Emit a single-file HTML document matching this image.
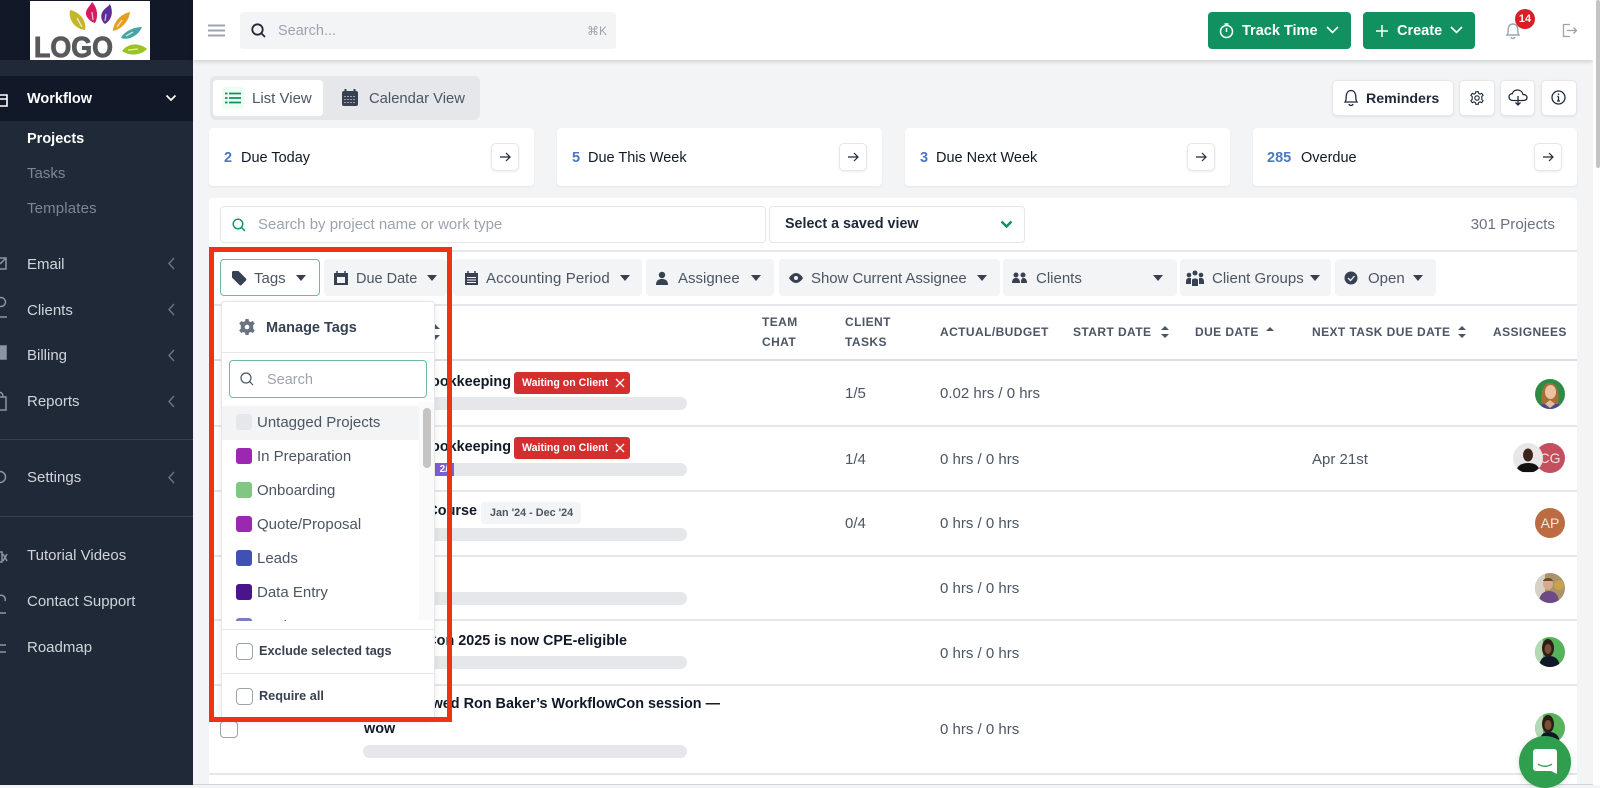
<!DOCTYPE html>
<html lang="en"><head><meta charset="utf-8"><title>Projects</title>
<style>
*{box-sizing:border-box}
html,body{margin:0;padding:0;width:1600px;height:785px;overflow:hidden;background:#f3f4f6;font-family:"Liberation Sans",Arial,sans-serif;color:#111827}
.a{position:absolute}
.t{position:absolute;white-space:nowrap;line-height:20px;height:20px;transform:translateY(1px)}
svg{position:absolute;overflow:visible}
.side{color:#d1d5db;font-size:15px;left:27px}
.btn{position:absolute;background:#fff;border:1px solid #e5e7eb;border-radius:5px;box-shadow:0 1px 2px rgba(0,0,0,.08)}
.card{position:absolute;top:128px;height:58px;background:#fff;border-radius:4px;box-shadow:0 1px 2px rgba(0,0,0,.06)}
.num{color:#4b78c0;font-weight:bold;font-size:14.5px}
.lbl{font-size:14.5px;color:#111827}
.chip{position:absolute;top:259px;height:37px;background:#f3f4f6;border-radius:4px}
.cl{color:#4b5563;font-size:15px;top:268px}
.th{font-size:12px;font-weight:bold;color:#4b5563;letter-spacing:.42px;transform:none}
.line{position:absolute;left:209px;width:1368px;height:2px;background:#e5e7eb}
.cell{font-size:15px;color:#4b5563;transform:none}
.title{font-size:14.4px;font-weight:bold;color:#111827}
.bar{position:absolute;left:363px;width:324px;height:13px;border-radius:7px;background:#e5e7eb}
.wait{position:absolute;left:514px;width:116px;height:22px;background:#d32f2f;border-radius:3px;color:#fff;font-size:10.6px;font-weight:bold;line-height:22px;padding-left:8px;white-space:nowrap}
.av{position:absolute;width:30px;height:30px;border-radius:50%;overflow:hidden;left:1535px}
.sw{position:absolute;left:236px;width:16px;height:16px;border-radius:3px}
.it{font-size:15px;color:#4b5563;left:257px}
.cb{position:absolute;left:236px;width:17px;height:17px;border:1px solid #9ca3af;border-radius:4px;background:#fff}
</style></head><body>

<!-- sidebar -->
<div class="a" style="left:0;top:0;width:193px;height:785px;background:#1f2937"></div>
<div class="a" style="left:0;top:0;width:193px;height:60px;background:#111827"></div>
<div class="a" style="left:0;top:76px;width:193px;height:45px;background:#111827"></div>
<div class="a" style="left:30px;top:1px;width:120px;height:59px;background:#fff"></div>
<svg style="left:30px;top:1px" width="120" height="59" viewBox="0 0 120 59">
<path d="M40 9C50 11 57 20 55 29C46 28 38 20 40 9Z" fill="#c4b52c"/>
<path d="M62 1C67 6 69 15 65 22C60 21 55 15 56 11C57 7 60 5 62 1Z" fill="#d81b60"/>
<path d="M80 3C83 10 83 18 75 23C71 20 70 14 73 10C75 7 78 6 80 3Z" fill="#5e2b97"/>
<path d="M100 11C99 20 92 28 83 30C83 22 90 13 100 11Z" fill="#e3a020"/>
<path d="M112 26C109 34 99 40 91 37C93 32 102 26 112 26Z" fill="#45a5a5"/>
<path d="M117 48C110 55 99 55 92 50C99 41 110 42 117 48Z" fill="#9cc324"/>
<path d="M47 17L52 26M62 11L63 19M76 13L75 20M92 19L87 26M103 31L96 35M108 48L98 49" stroke="#fff" stroke-width="1.300" opacity=".7" fill="none"/>
<text x="4" y="56" font-family="Liberation Sans" font-weight="bold" font-size="29" fill="#58595b" stroke="#58595b" stroke-width=".9" textLength="79" lengthAdjust="spacingAndGlyphs">LOGO</text>
</svg>
<svg style="left:0;top:90px" width="8" height="18" viewBox="0 0 8 18"><path d="M-6 5H7V16H-6ZM-6 9H7" fill="none" stroke="#fff" stroke-width="1.600"/></svg>
<div class="t side" style="top:88px;color:#fff;font-weight:bold;font-size:14.500px">Workflow</div>
<svg style="left:165px;top:94px" width="12" height="8"><path d="M1.500 1.500L6 6L10.500 1.500" fill="none" stroke="#fff" stroke-width="1.700"/></svg>
<div class="t side" style="top:128px;color:#fff;font-weight:bold;font-size:14.500px">Projects</div>
<div class="t side" style="top:163px;color:#7d8694">Tasks</div>
<div class="t side" style="top:198px;color:#7d8694;letter-spacing:.15px">Templates</div>
<div class="t side" style="top:254px">Email</div>
<div class="t side" style="top:300px">Clients</div>
<div class="t side" style="top:345px">Billing</div>
<div class="t side" style="top:391px">Reports</div>
<div class="t side" style="top:467px">Settings</div>
<div class="t side" style="top:545px">Tutorial Videos</div>
<div class="t side" style="top:591px">Contact Support</div>
<div class="t side" style="top:637px">Roadmap</div>
<svg style="left:0;top:255px" width="8" height="400" fill="none" stroke="#8d95a1" stroke-width="1.500">
<path d="M-5 3H6V14H-5ZM0 9L6 3"/><path d="M-3 45A4 4 0 0 1 5 49A4 4 0 0 1 -3 45M-5 62H7"/><path d="M-5 91H6V104H-5Z" fill="#8d95a1"/><path d="M-5 142H6V155H-5ZM-2 142C-2 136 3 136 3 142"/><circle cx="0" cy="222" r="5.500"/><path d="M-5 297H2V307H-5ZM3 299L7 306M7 299L3 306"/><path d="M-3 343A3 3 0 0 1 5 346M-5 358H6"/><path d="M-5 390H6M-5 397H6"/>
</svg>
<svg style="left:168px;top:255px" width="8" height="240" fill="none" stroke="#6b7280" stroke-width="1.500">
<path d="M6 3L1 8.500L6 14"/><path d="M6 49L1 54.500L6 60"/><path d="M6 95L1 100.500L6 106"/><path d="M6 141L1 146.500L6 152"/><path d="M6 217L1 222.500L6 228"/>
</svg>
<div class="a" style="left:0;top:439px;width:193px;height:1px;background:#374151"></div>
<div class="a" style="left:0;top:516px;width:193px;height:1px;background:#374151"></div>

<!-- header -->
<div class="a" style="left:193px;top:0;width:1400px;height:60px;background:#fff;box-shadow:0 2px 4px rgba(0,0,0,.14)"></div>
<svg style="left:208px;top:24px" width="18" height="13"><path d="M0 1.500H17M0 6.500H17M0 11.500H17" stroke="#9ca3af" stroke-width="2"/></svg>
<div class="a" style="left:240px;top:12px;width:376px;height:37px;background:#f3f4f6;border-radius:3px"></div>
<svg style="left:251px;top:23px" width="15" height="15" fill="none" stroke="#1f2937" stroke-width="1.800"><circle cx="6.500" cy="6.500" r="5.200"/><path d="M10.500 10.500L14 14"/></svg>
<div class="t" style="left:278px;top:20px;font-size:14.500px;color:#9ca3af">Search...</div>
<div class="t" style="left:587px;top:20px;font-size:12px;color:#9ca3af;font-family:'Liberation Sans','DejaVu Sans',sans-serif">⌘K</div>

<div class="a" style="left:1208px;top:12px;width:143px;height:37px;background:#10915f;border-radius:4px"></div>
<svg style="left:1219px;top:23px" width="16" height="16" fill="none" stroke="#fff" stroke-width="1.500"><circle cx="7.500" cy="8.500" r="6"/><path d="M7.500 5V9M5.500 1H9.500"/></svg>
<div class="t" style="left:1242px;top:20px;color:#fff;font-weight:bold;font-size:14.500px">Track Time</div>
<svg style="left:1326px;top:26px" width="13" height="8"><path d="M1 1L6.500 6.500L12 1" fill="none" stroke="#fff" stroke-width="1.600"/></svg>
<div class="a" style="left:1363px;top:12px;width:112px;height:37px;background:#10915f;border-radius:4px"></div>
<svg style="left:1376px;top:25px" width="12" height="12"><path d="M6 0V12M0 6H12" stroke="#fff" stroke-width="1.500"/></svg>
<div class="t" style="left:1397px;top:20px;color:#fff;font-weight:bold;font-size:14.500px">Create</div>
<svg style="left:1450px;top:26px" width="13" height="8"><path d="M1 1L6.500 6.500L12 1" fill="none" stroke="#fff" stroke-width="1.600"/></svg>
<svg style="left:1505px;top:22px" width="16" height="18" fill="none" stroke="#9ca3af" stroke-width="1.400"><path d="M2 13C3.500 11 3 9 3.300 6.500C3.700 3.500 5.500 2 8 2C10.500 2 12.300 3.500 12.700 6.500C13 9 12.500 11 14 13ZM6 15C6.500 17 9.500 17 10 15"/></svg>
<div class="a" style="left:1515px;top:9px;width:20px;height:20px;border-radius:50%;background:#d81f26;color:#fff;font-size:11px;font-weight:bold;text-align:center;line-height:20px">14</div>
<svg style="left:1562px;top:23px" width="16" height="15" fill="none" stroke="#9ca3af" stroke-width="1.300"><path d="M8 1.500H1.500V13.500H8M5 7.500H14.500M11.500 4.500L14.500 7.500L11.500 10.500"/></svg>

<div class="a" style="left:1593px;top:0;width:7px;height:785px;background:#fff"></div>
<div class="a" style="left:1596px;top:0;width:4px;height:168px;background:#c4c4c4;border-radius:2px"></div>

<!-- view toggle -->
<div class="a" style="left:210px;top:76px;width:270px;height:44px;background:#e5e7eb;border-radius:6px"></div>
<div class="a" style="left:213px;top:80px;width:110px;height:36px;background:#fff;border-radius:4px"></div>
<div class="a" style="left:222px;top:87px;width:22px;height:22px;background:#ecfdf3;border-radius:3px"></div>
<svg style="left:225px;top:92px" width="16" height="12"><path d="M4 1.500H16M4 6H16M4 10.500H16M0 1.500H2.500M0 6H2.500M0 10.500H2.500" stroke="#10915f" stroke-width="1.700"/></svg>
<div class="t" style="left:252px;top:88px;font-size:15px;color:#4b5563">List View</div>
<svg style="left:342px;top:89px" width="16" height="17"><path d="M2 2H14A2 2 0 0 1 16 4V15A2 2 0 0 1 14 17H2A2 2 0 0 1 0 15V4A2 2 0 0 1 2 2Z" fill="#374151"/><path d="M3.500 0V3M12.500 0V3" stroke="#374151" stroke-width="2"/><path d="M2 7.500H14M2 10.500H14M2 13.500H14" stroke="#9ca3af" stroke-width="1" stroke-dasharray="2 1"/></svg>
<div class="t" style="left:369px;top:88px;font-size:14.800px;color:#4b5563">Calendar View</div>

<!-- right buttons -->
<div class="btn" style="left:1332px;top:80px;width:122px;height:36px"></div>
<svg style="left:1343px;top:89px" width="16" height="18" fill="none" stroke="#1f2937" stroke-width="1.300"><path d="M2 13C3.500 11 3 9 3.300 6.500C3.700 3.500 5.500 1.500 8 1.500C10.500 1.500 12.300 3.500 12.700 6.500C13 9 12.500 11 14 13ZM6 15C6.500 17 9.500 17 10 15"/></svg>
<div class="t" style="left:1366px;top:88px;font-size:14.200px;font-weight:bold;color:#1f2937">Reminders</div>
<div class="btn" style="left:1459px;top:80px;width:36px;height:36px"></div>
<svg style="left:1470px;top:91px" width="14" height="14" fill="none" stroke="#1f2937" stroke-width="1.100"><circle cx="7" cy="7" r="2.200"/><path d="M5.800 .7H8.200L8.600 2.400L10.100 3.100L11.700 2.300L13.100 4.300L11.800 5.500V8.500L13.100 9.700L11.700 11.700L10.100 10.900L8.600 11.600L8.200 13.300H5.800L5.400 11.600L3.900 10.900L2.300 11.700L.9 9.700L2.200 8.500V5.500L.9 4.300L2.300 2.300L3.900 3.100L5.400 2.400Z"/></svg>
<div class="btn" style="left:1500px;top:80px;width:35px;height:36px"></div>
<svg style="left:1508px;top:89px" width="20" height="17" fill="none" stroke="#1f2937" stroke-width="1.300"><path d="M5 11.500C2.500 11.500 1 10 1 8C1 6 2.500 4.700 4.300 4.700C5 2.500 7 1 9.500 1C12.500 1 14.500 3 15 5.500C17.200 5.500 19 6.500 19 8.500C19 10.500 17.500 11.500 15 11.500ZM10 7V16M7.500 13.500L10 16L12.500 13.500"/></svg>
<div class="btn" style="left:1541px;top:80px;width:36px;height:36px"></div>
<svg style="left:1551px;top:90px" width="15" height="15" fill="none" stroke="#1f2937" stroke-width="1.300"><circle cx="7.500" cy="7.500" r="6.500"/><path d="M7.500 6.500V11M6 11H9M6.300 6.500H7.500M7.500 3.500V5"/></svg>

<!-- cards -->
<div class="card" style="left:209px;width:325px"></div>
<div class="card" style="left:557px;width:325px"></div>
<div class="card" style="left:905px;width:325px"></div>
<div class="card" style="left:1253px;width:324px"></div>
<div class="t num" style="left:224px;top:147px">2</div><div class="t lbl" style="left:241px;top:147px">Due Today</div>
<div class="t num" style="left:572px;top:147px">5</div><div class="t lbl" style="left:588px;top:147px">Due This Week</div>
<div class="t num" style="left:920px;top:147px">3</div><div class="t lbl" style="left:936px;top:147px">Due Next Week</div>
<div class="t num" style="left:1267px;top:147px">285</div><div class="t lbl" style="left:1301px;top:147px">Overdue</div>
<div class="btn" style="left:491px;top:143px;width:28px;height:28px"></div>
<div class="btn" style="left:839px;top:143px;width:28px;height:28px"></div>
<div class="btn" style="left:1187px;top:143px;width:28px;height:28px"></div>
<div class="btn" style="left:1534px;top:143px;width:28px;height:28px"></div>
<svg style="left:0;top:0" width="1600" height="200" fill="none" stroke="#1f2937" stroke-width="1.200">
<path d="M500 157H510M506 153L510 157L506 161"/><path d="M848 157H858M854 153L858 157L854 161"/><path d="M1196 157H1206M1202 153L1206 157L1202 161"/><path d="M1543 157H1553M1549 153L1553 157L1549 161"/>
</svg>

<!-- table panel -->
<div class="a" style="left:209px;top:198px;width:1368px;height:587px;background:#fff;border-radius:4px 4px 0 0"></div>
<div class="a" style="left:220px;top:206px;width:546px;height:37px;border:1px solid #e5e7eb;border-radius:4px;background:#fff"></div>
<svg style="left:232px;top:218px" width="14" height="14" fill="none" stroke="#10915f" stroke-width="1.400"><circle cx="6" cy="6" r="4.800"/><path d="M9.500 9.500L13 13"/></svg>
<div class="t" style="left:258px;top:214px;font-size:15px;color:#9ca3af">Search by project name or work type</div>
<div class="a" style="left:769px;top:206px;width:256px;height:37px;border:1px solid #e5e7eb;border-radius:4px;background:#fff"></div>
<div class="t" style="left:785px;top:213px;font-size:14.300px;font-weight:bold;color:#1f2937">Select a saved view</div>
<svg style="left:1000px;top:220px" width="13" height="9"><path d="M1.500 1.500L6.500 6.500L11.500 1.500" fill="none" stroke="#10915f" stroke-width="2.400"/></svg>
<div class="t" style="right:45px;top:214px;font-size:15.200px;color:#6b7280">301 Projects</div>

<div class="line" style="top:250px"></div>
<div class="line" style="top:304px"></div>

<!-- chips -->
<div class="chip" style="left:220px;width:100px;background:#fff;border:1px solid #6fb9a0"></div>
<div class="chip" style="left:324px;width:123px"></div>
<div class="chip" style="left:453px;width:189px"></div>
<div class="chip" style="left:646px;width:128px"></div>
<div class="chip" style="left:779px;width:221px"></div>
<div class="chip" style="left:1003px;width:174px"></div>
<div class="chip" style="left:1180px;width:151px"></div>
<div class="chip" style="left:1335px;width:101px"></div>
<svg style="left:232px;top:271px" width="15" height="15"><path d="M0 1.500A1.500 1.500 0 0 1 1.500 0H6.500L14 7.500A1.500 1.500 0 0 1 14 9.500L9.500 14A1.500 1.500 0 0 1 7.500 14L0 6.500Z" fill="#374151"/></svg>
<div class="t cl" style="left:254px">Tags</div>
<div class="t cl" style="left:356px;font-size:14.500px">Due Date</div>
<div class="t cl" style="left:486px;letter-spacing:.12px">Accounting Period</div>
<div class="t cl" style="left:678px">Assignee</div>
<div class="t cl" style="left:811px;letter-spacing:-.05px">Show Current Assignee</div>
<div class="t cl" style="left:1036px">Clients</div>
<div class="t cl" style="left:1212px">Client Groups</div>
<div class="t cl" style="left:1368px">Open</div>
<svg style="left:0;top:255px" width="1600" height="45" fill="#374151">
<path d="M296 20H306L301 26Z"/><path d="M427 20H437L432 26Z"/><path d="M620 20H630L625 26Z"/><path d="M751 20H761L756 26Z"/><path d="M977 20H987L982 26Z"/><path d="M1153 20H1163L1158 26Z"/><path d="M1310 20H1320L1315 26Z"/><path d="M1413 20H1423L1418 26Z"/>
<path d="M334 18H348V30H334Z"/><path d="M337 16V19M345 16V19" stroke="#374151" stroke-width="1.500"/><path d="M337 22H345V28H337Z" fill="#f3f4f6"/>
<path d="M465 18H478V30H465Z"/><path d="M468 16V19M475 16V19" stroke="#374151" stroke-width="1.500"/><path d="M467 22.500H476M467 25H476M467 27.500H476" stroke="#f3f4f6" stroke-width="1"/>
<circle cx="662" cy="20" r="3.200"/><path d="M656 30C656 25 659 24 662 24C665 24 668 25 668 30Z"/>
<path d="M789 23C791 19.500 794 18 796 18C798 18 801 19.500 803 23C801 26.500 798 28 796 28C794 28 791 26.500 789 23Z"/><circle cx="796" cy="23" r="2" fill="#f3f4f6"/>
<circle cx="1016" cy="20" r="2.500"/><circle cx="1023" cy="20" r="2.500"/><path d="M1012 28C1012 24 1014 23 1016 23C1018 23 1020 24 1020 28ZM1021 28C1021 24 1022 23 1023.500 23C1025 23 1027 24 1027 28Z"/>
<circle cx="1195" cy="18" r="2.500"/><circle cx="1189" cy="20" r="2.300"/><circle cx="1201" cy="20" r="2.300"/><path d="M1186 27C1186 23 1188 22.500 1191 23V29H1186ZM1192 31V25C1192 23 1198 23 1198 25V31ZM1199 23C1202 22.500 1204 23 1204 27V29H1199Z"/>
<circle cx="1351" cy="23" r="6.500"/><path d="M1348 23L1350.500 25.500L1354.500 21" fill="none" stroke="#f3f4f6" stroke-width="1.300"/>
</svg>

<!-- table header -->
<div class="t th" style="left:762px;top:312px">TEAM</div><div class="t th" style="left:762px;top:332px">CHAT</div>
<div class="t th" style="left:845px;top:312px">CLIENT</div><div class="t th" style="left:845px;top:332px">TASKS</div>
<div class="t th" style="left:940px;top:322px">ACTUAL/BUDGET</div>
<div class="t th" style="left:1073px;top:322px">START DATE</div>
<div class="t th" style="left:1195px;top:322px">DUE DATE</div>
<div class="t th" style="left:1312px;top:322px">NEXT TASK DUE DATE</div>
<div class="t th" style="left:1493px;top:322px">ASSIGNEES</div>
<svg style="left:0;top:322px" width="1600" height="20" fill="#4b5563">
<path d="M430 7H440L435 2ZM430 13H440L435 18Z"/>
<path d="M1161 8H1169L1165 4ZM1161 12H1169L1165 16Z"/>
<path d="M1266 9H1274L1270 5Z"/>
<path d="M1458 8H1466L1462 4ZM1458 12H1466L1462 16Z"/>
</svg>
<div class="line" style="top:359px;height:2px;background:#dcdfe3"></div>
<div class="line" style="top:425px"></div>
<div class="line" style="top:490px"></div>
<div class="line" style="top:555px"></div>
<div class="line" style="top:619px"></div>
<div class="line" style="top:684px"></div>
<div class="line" style="top:773px"></div>
<div class="a" style="left:193px;top:784px;width:1400px;height:1px;background:#d1d5db"></div>

<!-- row checkbox -->
<div class="a" style="left:220px;top:721px;width:18px;height:17px;border:1px solid #9ca3af;border-radius:4px;background:#fff"></div>

<!-- titles -->
<div class="t title" style="right:1089px;top:371px">Bookkeeping</div>
<div class="t title" style="right:1089px;top:436px">Bookkeeping</div>
<div class="t title" style="right:1123px;top:500px">Course</div>
<div class="t title" style="right:973px;top:630px">WorkflowCon 2025 is now CPE-eligible</div>
<div class="t title" style="right:880px;top:693px">Reviewed Ron Baker’s WorkflowCon session —</div>
<div class="t title" style="left:364px;top:718px">wow</div>
<div class="wait" style="top:372px">Waiting on Client<svg style="left:101px;top:6px" width="10" height="10"><path d="M1 1L9 9M9 1L1 9" stroke="#fff" stroke-width="1.300"/></svg></div>
<div class="wait" style="top:437px">Waiting on Client<svg style="left:101px;top:6px" width="10" height="10"><path d="M1 1L9 9M9 1L1 9" stroke="#fff" stroke-width="1.300"/></svg></div>
<div class="a" style="left:481px;top:502px;width:100px;height:22px;background:#f3f4f6;border-radius:4px;font-size:10.800px;font-weight:bold;color:#4b5563;line-height:22px;padding-left:9px;white-space:nowrap">Jan '24 - Dec '24</div>
<div class="bar" style="top:397px"></div>
<div class="bar" style="top:463px"></div>
<div class="a" style="left:425px;top:463px;width:29px;height:13px;background:#7c5fd0;color:#fff;font-size:10px;font-weight:bold;line-height:13px;text-align:right;padding-right:6px">2/</div>
<div class="bar" style="top:528px"></div>
<div class="bar" style="top:592px"></div>
<div class="bar" style="top:656px"></div>
<div class="bar" style="top:745px"></div>

<!-- cells -->
<div class="t cell" style="left:845px;top:384px">1/5</div>
<div class="t cell" style="left:845px;top:450px">1/4</div>
<div class="t cell" style="left:845px;top:514px">0/4</div>
<div class="t cell" style="left:940px;top:384px">0.02 hrs / 0 hrs</div>
<div class="t cell" style="left:940px;top:450px">0 hrs / 0 hrs</div>
<div class="t cell" style="left:940px;top:514px">0 hrs / 0 hrs</div>
<div class="t cell" style="left:940px;top:579px">0 hrs / 0 hrs</div>
<div class="t cell" style="left:940px;top:644px">0 hrs / 0 hrs</div>
<div class="t cell" style="left:940px;top:720px">0 hrs / 0 hrs</div>
<div class="t cell" style="left:1312px;top:450px">Apr 21st</div>

<!-- avatars -->
<div class="av" style="top:379px;background:#2e8b45"><svg width="30" height="30" style="left:0;top:0"><path d="M6 30C6 23 10 21 15 21C21 21 25 24 25 30Z" fill="#4a4a8a"/><path d="M7 25C5 14 8 4 15 4C22 4 25 14 23 25Z" fill="#a56f38"/><ellipse cx="15.500" cy="13" rx="5.500" ry="7" fill="#eec1a4"/><path d="M10 25L15 21L20 25L15 29Z" fill="#e8b89a"/></svg></div>
<div class="av" style="top:443px;background:#c2505f;color:#f7dfe2;font-size:14px;line-height:30px;text-align:center">CG</div>
<div class="av" style="left:1513px;top:443px;background:#e8e6e6"><svg width="30" height="30" style="left:0;top:0"><path d="M3 29C4 22 9 20 15 20C21 20 26 22 27 29Z" fill="#111"/><ellipse cx="15" cy="12" rx="5" ry="6.500" fill="#3a2418"/></svg></div>
<div class="av" style="top:508px;background:#bd6b42;color:#f8e8df;font-size:14px;line-height:30px;text-align:center">AP</div>
<div class="av" style="top:573px;background:#a89468"><svg width="30" height="30" style="left:0;top:0"><rect width="10" height="30" fill="#d5d3c8"/><circle cx="24" cy="12" r="5" fill="#c9a24a"/><path d="M4 30C4 22 8 18 14 18C20 18 24 22 24 30Z" fill="#6d4a85"/><ellipse cx="13" cy="11" rx="5" ry="6" fill="#d8ab8c"/><path d="M8 8C9 4 17 4 18 8Z" fill="#6a4a2a"/></svg></div>
<div class="av" style="top:637px;background:#55b45a"><svg width="30" height="30" style="left:0;top:0"><rect width="8" height="30" fill="#b5d8b5"/><path d="M4 30C5 21 9 19 14 19C19 19 24 21 25 30Z" fill="#10182a"/><ellipse cx="13" cy="11" rx="6" ry="9" fill="#2d1c14"/><ellipse cx="13" cy="12" rx="3.500" ry="5" fill="#7a4e35"/></svg></div>
<div class="av" style="top:713px;background:#55b45a"><svg width="30" height="30" style="left:0;top:0"><rect width="8" height="30" fill="#b5d8b5"/><path d="M4 30C5 21 9 19 14 19C19 19 24 21 25 30Z" fill="#10182a"/><ellipse cx="13" cy="11" rx="6" ry="9" fill="#2d1c14"/><ellipse cx="13" cy="12" rx="3.500" ry="5" fill="#7a4e35"/></svg></div>

<!-- chat -->
<div class="a" style="left:1519px;top:736px;width:52px;height:52px;border-radius:50%;background:#2f9e4f;box-shadow:0 1px 6px rgba(0,0,0,.15)"></div>
<svg style="left:1533px;top:749px" width="25" height="25"><path d="M3 0H21A3 3 0 0 1 24 3V25L18 22H3A3 3 0 0 1 0 19V3A3 3 0 0 1 3 0Z" fill="#fff"/><path d="M5 15C9 18 15 18 19 15" fill="none" stroke="#2f9e4f" stroke-width="1.400"/></svg>

<!-- dropdown -->
<div class="a" style="left:221px;top:301px;width:214px;height:420px;background:#fff;border:1px solid #e5e7eb;border-radius:4px 4px 0 0;box-shadow:0 2px 8px rgba(0,0,0,.08)"></div>
<svg style="left:239px;top:319px" width="16" height="16"><path d="M6.500 0H9.500L10 2.200L11.800 3L13.800 2L15.800 4.600L14.200 6.200V9.800L15.800 11.400L13.800 14L11.800 13L10 13.800L9.500 16H6.500L6 13.800L4.200 13L2.200 14L.2 11.400L1.800 9.800V6.200L.2 4.600L2.200 2L4.200 3L6 2.200Z" fill="#6b7280"/><circle cx="8" cy="8" r="2.300" fill="#fff"/></svg>
<div class="t" style="left:266px;top:317px;font-size:14.500px;font-weight:bold;color:#374151">Manage Tags</div>
<div class="a" style="left:222px;top:352px;width:212px;height:1px;background:#e5e7eb"></div>
<div class="a" style="left:229px;top:360px;width:198px;height:38px;border:1px solid #6fb9a0;border-radius:4px;background:#fff"></div>
<svg style="left:240px;top:372px" width="14" height="14" fill="none" stroke="#4b5563" stroke-width="1.200"><circle cx="6" cy="6" r="5"/><path d="M9.700 9.700L13 13"/></svg>
<div class="t" style="left:267px;top:369px;font-size:14.500px;color:#9ca3af">Search</div>
<div class="a" style="left:222px;top:406px;width:197px;height:34px;background:#f3f4f6"></div>
<div class="a" style="left:419px;top:402px;width:15px;height:218px;background:#fafafa"></div>
<div class="a" style="left:423px;top:408px;width:8px;height:60px;background:#c4c4c4;border-radius:4px"></div>
<div class="sw" style="top:414px;background:#e5e7eb"></div><div class="t it" style="top:412px">Untagged Projects</div>
<div class="sw" style="top:448px;background:#9c27b0"></div><div class="t it" style="top:446px">In Preparation</div>
<div class="sw" style="top:482px;background:#81c784"></div><div class="t it" style="top:480px">Onboarding</div>
<div class="sw" style="top:516px;background:#9c27b0"></div><div class="t it" style="top:514px">Quote/Proposal</div>
<div class="sw" style="top:550px;background:#3f51b5"></div><div class="t it" style="top:548px">Leads</div>
<div class="sw" style="top:584px;background:#4a148c"></div><div class="t it" style="top:582px">Data Entry</div>
<div class="sw" style="top:618px;background:#7e7cc0"></div><div class="t it" style="top:616px">Design</div>
<div class="a" style="left:222px;top:621px;width:212px;height:60px;background:#fff"></div>
<div class="a" style="left:222px;top:629px;width:212px;height:1px;background:#e5e7eb"></div>
<div class="cb" style="top:643px"></div>
<div class="t" style="left:259px;top:640px;font-size:12.700px;font-weight:bold;color:#374151">Exclude selected tags</div>
<div class="a" style="left:222px;top:673px;width:212px;height:1px;background:#e5e7eb"></div>
<div class="cb" style="top:688px"></div>
<div class="t" style="left:259px;top:685px;font-size:12.700px;font-weight:bold;color:#374151">Require all</div>

<!-- highlight -->
<div class="a" style="left:209px;top:247px;width:243px;height:475px;border:5px solid #ee3311"></div>

</body></html>
